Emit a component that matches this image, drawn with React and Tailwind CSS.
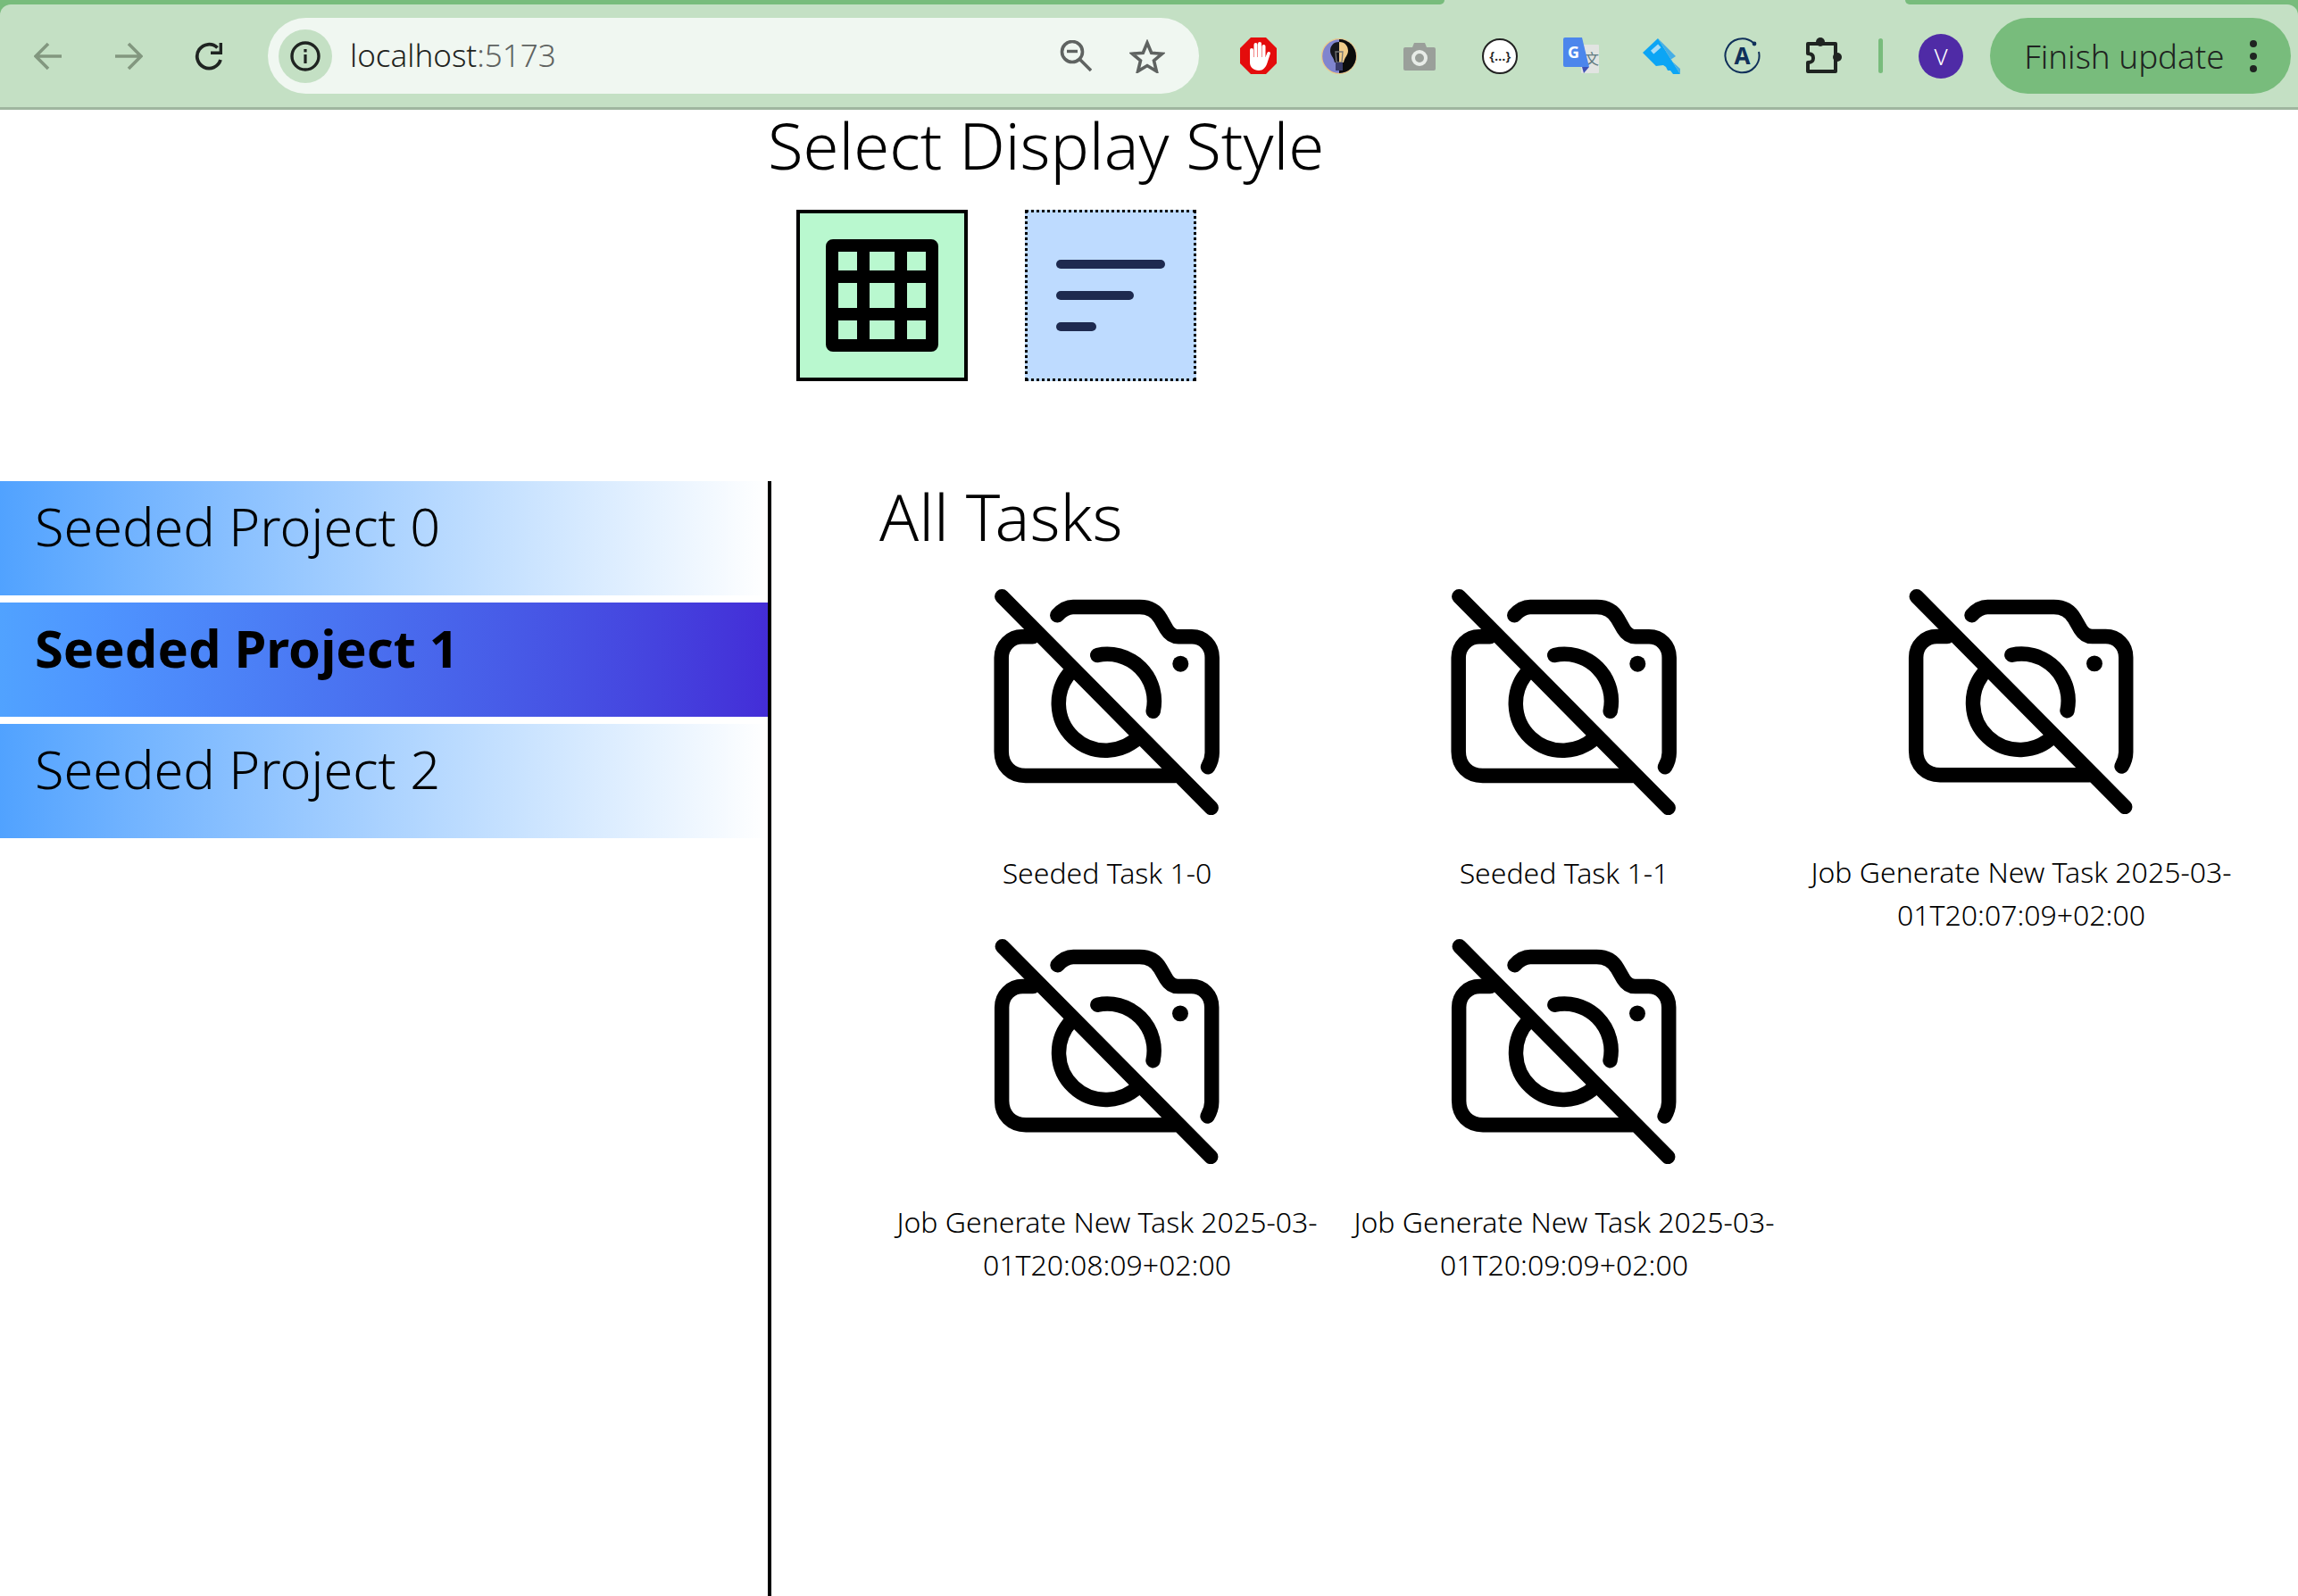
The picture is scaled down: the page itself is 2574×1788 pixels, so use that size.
import React from 'react';

const font = "font-['Noto_Sans',sans-serif]";

const projects = [
  { name: 'Seeded Project 0' },
  { name: 'Seeded Project 1', selected: true },
  { name: 'Seeded Project 2' },
];

const tasks = [
  'Seeded Task 1-0',
  'Seeded Task 1-1',
  'Job Generate New Task 2025-03-01T20:07:09+02:00',
  'Job Generate New Task 2025-03-01T20:08:09+02:00',
  'Job Generate New Task 2025-03-01T20:09:09+02:00',
];

function BackIcon({ flip }) {
  return (
    <svg width="32" height="32" viewBox="0 0 32 32" fill="none" stroke="#82977f" strokeWidth="3.6" className={flip ? '-scale-x-100' : ''}>
      <path d="M31 16H3M16 2L2 16l14 14" />
    </svg>
  );
}

function ReloadIcon() {
  return (
    <svg width="32" height="32" viewBox="0 0 32 32" fill="none">
      <path d="M29 20a13.4 13.4 0 1 1-3.5-13.5" stroke="#1f2421" strokeWidth="3.8" />
      <path d="M31 1v13H18v-3.4h9.6V1z" fill="#1f2421" />
    </svg>
  );
}

function InfoIcon() {
  return (
    <svg width="34" height="34" viewBox="0 0 34 34" fill="none">
      <circle cx="17" cy="17" r="15" stroke="#1f2421" strokeWidth="3.4" />
      <rect x="15.4" y="15" width="3.2" height="10" fill="#1f2421" />
      <rect x="15.4" y="9" width="3.2" height="3.4" fill="#1f2421" />
    </svg>
  );
}

function ZoomOutIcon() {
  return (
    <svg width="36" height="36" viewBox="0 0 36 36" fill="none" stroke="#5f6361" strokeWidth="3.6">
      <circle cx="14" cy="13" r="11.5" />
      <path d="M22 21l13 13" />
      <path d="M8 12.5h12" strokeWidth="3.4" />
    </svg>
  );
}

function StarIcon() {
  return (
    <svg width="40" height="38" viewBox="0 0 40 38" fill="none" stroke="#5f6361" strokeWidth="3.6">
      <path d="M20 4l4.7 11.2 12 1-9.2 7.8 2.9 11.8L20 29.5 9.6 35.8l2.9-11.8-9.2-7.8 12-1z" />
    </svg>
  );
}

function AdblockIcon() {
  return (
    <svg width="41" height="41" viewBox="0 0 41 41">
      <path d="M12 0h17l12 12v17L29 41H12L0 29V12z" fill="#e40c0c" />
      <g fill="#fff">
        <rect x="11" y="12" width="4" height="16" rx="2" />
        <rect x="15.5" y="6" width="4" height="20" rx="2" />
        <rect x="20" y="5" width="4" height="21" rx="2" />
        <rect x="24.5" y="8" width="4" height="18" rx="2" />
        <path d="M11 22h17.5l2-5c1-2 4-1 3.4 1l-3.6 11c-1.6 4.6-4.6 8-9.3 8-5.6 0-10-3.6-10-9z" />
      </g>
    </svg>
  );
}

function BulbIcon() {
  return (
    <svg width="40" height="40" viewBox="0 0 40 40">
      <circle cx="20" cy="20" r="19.4" fill="#8085cf" stroke="#ecc98a" strokeWidth="1.2" />
      <path d="M20 1a19 19 0 0 1 0 38z" fill="#0b0b0b" />
      <path d="M20 4c-7 0-10 5-10 10 0 5 4 7 5 13h5z" fill="#17171c" />
      <path d="M20 4c7 0 10 5 10 10 0 5-4 7-5 13h-5z" fill="#f0cb8a" />
      <path d="M16 15h8l-1 12h-6z" fill="none" stroke="#777" strokeWidth="1.3" />
      <rect x="16" y="27" width="8" height="9" fill="#3a3c6c" />
    </svg>
  );
}

function CameraIcon() {
  return (
    <svg width="36" height="32" viewBox="0 0 36 32">
      <path d="M2 6h8l2-5h12l2 5h8a2 2 0 0 1 2 2v22a2 2 0 0 1-2 2H2a2 2 0 0 1-2-2V8a2 2 0 0 1 2-2z" fill="#9a9f9a" />
      <circle cx="18" cy="18" r="7" fill="none" stroke="#e8ece8" strokeWidth="4" />
    </svg>
  );
}

function JsonIcon() {
  return (
    <div className={`flex h-[40px] w-[40px] items-center justify-center rounded-full border-2 border-[#222] bg-white text-[15px] font-semibold leading-none text-[#222] ${font}`}>
      {'{…}'}
    </div>
  );
}

function TranslateIcon() {
  return (
    <svg width="40" height="41" viewBox="0 0 40 41">
      <rect x="20" y="8" width="20" height="32" rx="1" fill="#e2e4e2" />
      <text x="24" y="30" fontSize="16" fill="#5f7a80" fontFamily="'Noto Sans CJK SC',sans-serif">文</text>
      <path d="M2 0h19l8 33H2a2 2 0 0 1-2-2V2a2 2 0 0 1 2-2z" fill="#4c86ec" />
      <path d="M21 33h8l-6 7z" fill="#3f51b5" />
      <text x="5" y="23" fontSize="18" fontWeight="700" fill="#fff" fontFamily="'Noto Sans',sans-serif">G</text>
    </svg>
  );
}

function KeyIcon() {
  return (
    <svg width="42" height="40" viewBox="0 0 42 40">
      <path d="M17 0L0 16l15 15 8-1 3 2 2 4 3 0 3 4h8z" fill="#0ca5f5" />
      <path d="M17 0l20 20-6 4 11 10v6z" fill="#46aee6" />
      <rect x="9" y="10" width="11" height="5" fill="#a9dcf6" transform="rotate(-42 14 12)" />
    </svg>
  );
}

function AccountIcon() {
  return (
    <svg width="41" height="41" viewBox="0 0 41 41" fill="none">
      <path d="M33 6a19 19 0 1 0 6 10" stroke="#10305a" strokeWidth="2" />
      <circle cx="34" cy="7" r="2.4" fill="#10305a" />
      <text x="20.5" y="30" textAnchor="middle" fontSize="26" fontWeight="700" fill="#10305a" fontFamily="'Noto Sans',sans-serif">A</text>
    </svg>
  );
}

function PuzzleIcon() {
  return (
    <svg width="42" height="42" viewBox="0 0 42 42" fill="none" stroke="#1f2421" strokeWidth="4">
      <path d="M4 7h31v31H4V28c5 0 6-2 6-5s-2-5-6-5z" strokeLinejoin="round" />
      <circle cx="18" cy="5" r="5" fill="#1f2421" stroke="none" />
      <circle cx="37" cy="22" r="5" fill="#1f2421" stroke="none" />
    </svg>
  );
}

function GridIcon() {
  return (
    <svg width="126" height="126" viewBox="0 0 126 126">
      <path
        fillRule="evenodd"
        d="M8 0h110a8 8 0 0 1 8 8v110a8 8 0 0 1-8 8H8a8 8 0 0 1-8-8V8a8 8 0 0 1 8-8zM14 14v21h21V14zM49 14v21h28V14zM91 14v21h21V14zM14 49v28h21V49zM49 49v28h28V49zM91 49v28h21V49zM14 91v21h21V91zM49 91v21h28V91zM91 91v21h21V91z"
      />
    </svg>
  );
}

function ListIcon() {
  return (
    <svg width="122" height="80" viewBox="0 0 122 80" fill="#1e2a4f">
      <rect width="122" height="10" rx="5" />
      <rect y="35" width="87" height="10" rx="5" />
      <rect y="70" width="45" height="10" rx="5" />
    </svg>
  );
}

function NoImageIcon() {
  return (
    <svg width="256" height="256" viewBox="0 0 256 256" fill="none" stroke="#000" strokeWidth="16.5" strokeLinecap="round">
      <path d="M72.3 32.3C77 27 82 23 90 23h74.7c11 0 18.3 4.3 23.3 13.3l6.7 11.7c3 5 7.3 8.3 13.3 8.3h15c13 0 22.7 10 22.7 23.4v106.6c0 6-1.7 11-4.7 16" />
      <path d="M44.7 56.3H33C20 56.3 9.7 66.5 9.7 79.7V185c0 16 11 27 27 27h168" />
      <path d="M117.3 77A52.7 52.7 0 0 1 179.7 139.7" />
      <path d="M88 95A52.7 52.7 0 0 0 165 167" strokeLinecap="butt" />
      <path d="M10.3 11.3L244.7 248" />
      <circle cx="210.3" cy="86.7" r="9" fill="#000" stroke="none" />
    </svg>
  );
}

function Slot({ children }) {
  return <div className="flex w-[90.4px] shrink-0 items-center justify-center">{children}</div>;
}

function BrowserBar() {
  return (
    <div className={`border-b-[3px] border-[#9fb69f] bg-[#78bc7c] ${font}`}>
      {/* tab strip */}
      <div className="flex h-[5px]">
        <div className="w-[1606px]" />
        <div className="w-[12px] bg-[#c4e0c4]">
          <div className="h-full rounded-br-[12px] bg-[#78bc7c]" />
        </div>
        <div className="w-[516px] bg-[#c4e0c4]" />
        <div className="w-[12px] bg-[#c4e0c4]">
          <div className="h-full rounded-bl-[12px] bg-[#78bc7c]" />
        </div>
      </div>
      <div className="flex h-[115px] items-start rounded-t-[12px] bg-[#c4e0c4] pl-[9px] pt-[15px]">
        <div className="flex h-[85px] w-[270px] shrink-0 items-center">
          <div className="flex w-[90px] justify-center"><BackIcon /></div>
          <div className="flex w-[90px] justify-center"><BackIcon flip /></div>
          <div className="flex w-[90px] justify-center"><ReloadIcon /></div>
        </div>
        <div className="ml-[21px] flex h-[85px] w-[1043px] shrink-0 items-center rounded-full bg-[#f0f7f1] pl-[12px] pr-[38px]">
          <div className="flex h-[60px] w-[60px] items-center justify-center rounded-full bg-[#c4e0c4]"><InfoIcon /></div>
          <div className="ml-[20px] flex-1 text-[35px] font-light text-[#1f2421]">
            localhost<span className="text-[#5f6361]">:5173</span>
          </div>
          <ZoomOutIcon />
          <div className="ml-[42px]"><StarIcon /></div>
        </div>
        <div className="ml-[21px] flex h-[85px] shrink-0 items-center">
          <Slot><AdblockIcon /></Slot>
          <Slot><BulbIcon /></Slot>
          <Slot><CameraIcon /></Slot>
          <Slot><JsonIcon /></Slot>
          <Slot><TranslateIcon /></Slot>
          <Slot><KeyIcon /></Slot>
          <Slot><AccountIcon /></Slot>
          <Slot><PuzzleIcon /></Slot>
        </div>
        <div className="ml-[17px] mt-[23px] h-[39px] w-[5px] shrink-0 rounded-full bg-[#78bc7c]" />
        <div className="ml-[40px] mt-[18px] flex h-[50px] w-[50px] shrink-0 items-center justify-center rounded-full bg-[#4f2ba6] text-[26px] font-light text-white">V</div>
        <div className="ml-[30px] flex h-[85px] w-[337px] shrink-0 items-center rounded-full bg-[#78bc7c] pl-[38px] text-[#1f2421]">
          <span className="flex-1 text-[36.7px] font-light leading-[52px]">Finish update</span>
          <div className="mr-[38px] flex flex-col gap-[6px]">
            <div className="h-[8px] w-[8px] rounded-full bg-[#1f2421]" />
            <div className="h-[8px] w-[8px] rounded-full bg-[#1f2421]" />
            <div className="h-[8px] w-[8px] rounded-full bg-[#1f2421]" />
          </div>
        </div>
      </div>
    </div>
  );
}

export default function App() {
  return (
    <div className={`flex h-[1788px] w-[2574px] flex-col overflow-hidden bg-white text-black ${font}`}>
      <BrowserBar />

      {/* Display style picker */}
      <h1 className="pl-[860px] text-[72.4px] font-light leading-[78px] text-black">Select Display Style</h1>
      <div className="mt-[34px] flex gap-[64px] pl-[892px]">
        <button className="flex h-[192px] w-[192px] items-center justify-center border-4 border-black bg-green-200">
          <GridIcon />
        </button>
        <button className="flex h-[192px] w-[192px] items-center justify-center border-[3px] border-dotted border-black bg-blue-200">
          <ListIcon />
        </button>
      </div>

      <div className="mt-[112px] flex flex-1">
        {/* Projects */}
        <div className="flex w-[864px] shrink-0 flex-col gap-2 border-r-4 border-black">
          {projects.map(p => (
            <div
              key={p.name}
              className={
                p.selected
                  ? 'h-[128px] bg-gradient-to-r from-blue-400 to-indigo-700 pl-[39px] text-[57.8px] font-bold leading-[102px]'
                  : 'h-[128px] bg-gradient-to-r from-blue-400 to-white pl-[39px] text-[59.4px] font-light leading-[100px]'
              }
            >
              {p.name}
            </div>
          ))}
        </div>

        {/* Tasks */}
        <div className="flex-1 pl-[121px]">
          <h2 className="text-[72.6px] font-light leading-[78px]">All Tasks</h2>
          <div className="-ml-px mt-[40px] grid w-[1536px] grid-cols-3">
            {tasks.map(t => (
              <div key={t} className="flex h-[392px] flex-col items-center">
                <NoImageIcon />
                <div className="mt-[41px] w-[500px] break-words text-center text-[32px] font-light leading-[48px]">{t}</div>
              </div>
            ))}
          </div>
        </div>
      </div>
    </div>
  );
}
